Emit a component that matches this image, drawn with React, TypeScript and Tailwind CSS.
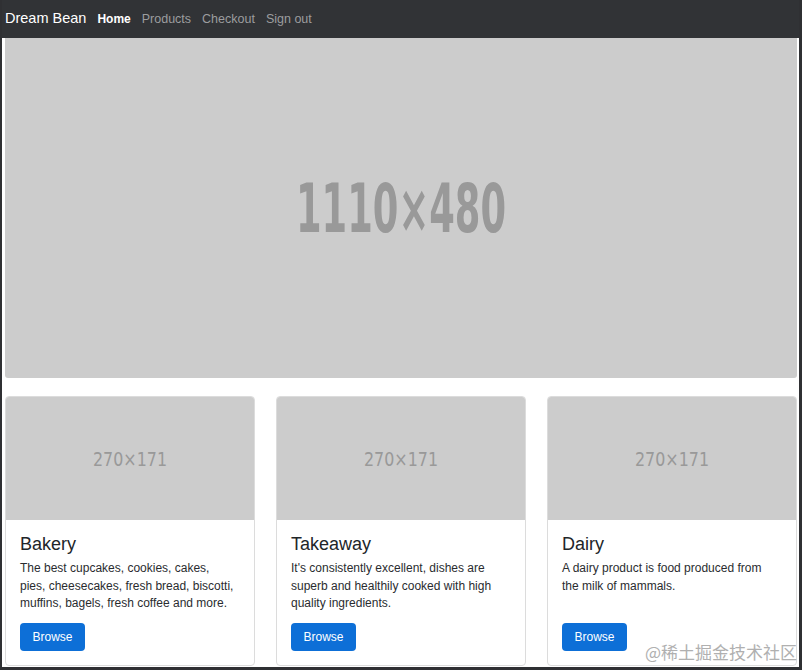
import React from 'react';

const cards = [
  {
    title: 'Bakery',
    text: 'The best cupcakes, cookies, cakes, pies, cheesecakes, fresh bread, biscotti, muffins, bagels, fresh coffee and more.',
  },
  {
    title: 'Takeaway',
    text: "It's consistently excellent, dishes are superb and healthily cooked with high quality ingredients.",
  },
  {
    title: 'Dairy',
    text: 'A dairy product is food produced from the milk of mammals.',
  },
];

function Placeholder({ label, fontSize, textWidth, bold, className }: { label: string; fontSize: number; textWidth: number; bold?: boolean; className: string }) {
  return (
    <div className={className}>
      <svg width="100%" height="100%" className="block">
        <text
          x="50%"
          y="50%"
          dominantBaseline="central"
          textAnchor="middle"
          fill="#999999"
          fontSize={fontSize}
          fontWeight={bold ? 700 : 400}
          fontFamily="'DejaVu Sans Condensed', 'Liberation Sans Narrow', sans-serif"
          textLength={textWidth}
          lengthAdjust="spacingAndGlyphs"
        >
          {label}
        </text>
      </svg>
    </div>
  );
}

export default function App() {
  return (
    <div className="relative h-[670px] w-[802px] overflow-hidden bg-white border-l-2 border-r-[3px] border-b-[3px] border-[#2f3033] font-['Liberation_Sans',Arial,sans-serif]">
      <nav className="h-[38px] bg-[#313336] flex items-center pl-[3px] gap-[11px]">
        <span className="text-[14.5px] text-white">Dream Bean</span>
        <span className="text-[12px] font-bold text-white">Home</span>
        <span className="text-[12.5px] text-[#9c9d9f]">Products</span>
        <span className="text-[12.5px] text-[#9c9d9f]">Checkout</span>
        <span className="text-[12.5px] text-[#9c9d9f]">Sign out</span>
      </nav>

      <div className="pl-[3px] pr-[2px]">
        <Placeholder
          label="1110×480"
          fontSize={68}
          textWidth={210}
          bold
          className="h-[340px] bg-[#cccccc] rounded-b-[3px]"
        />

        <div className="mt-[18px] grid grid-cols-3 gap-[21px]">
          {cards.map(card => (
            <div key={card.title} className="h-[270px] flex flex-col border border-[#dcdcdc] rounded-[4px] overflow-hidden">
              <Placeholder
                label="270×171"
                fontSize={19}
                textWidth={74}
                className="h-[123px] bg-[#cccccc] shrink-0"
              />
              <div className="flex-1 flex flex-col pl-[14px] pr-[17px] pt-[13px] pb-[14px]">
                <h5 className="text-[18px] leading-[22px] text-[#212529]">{card.title}</h5>
                <p className="mt-[5px] text-[12px] leading-[17.5px] text-[#2a2c2f]">{card.text}</p>
                <button className="mt-auto w-[65px] h-[28px] rounded-[4px] bg-[#0d6fd7] text-white text-[12px]">
                  Browse
                </button>
              </div>
            </div>
          ))}
        </div>
      </div>

      <span className="absolute right-[2px] bottom-[3px] text-[17px] text-[#b0b0b0] font-['Noto_Sans_CJK_SC',sans-serif]">
        @稀土掘金技术社区
      </span>
    </div>
  );
}
